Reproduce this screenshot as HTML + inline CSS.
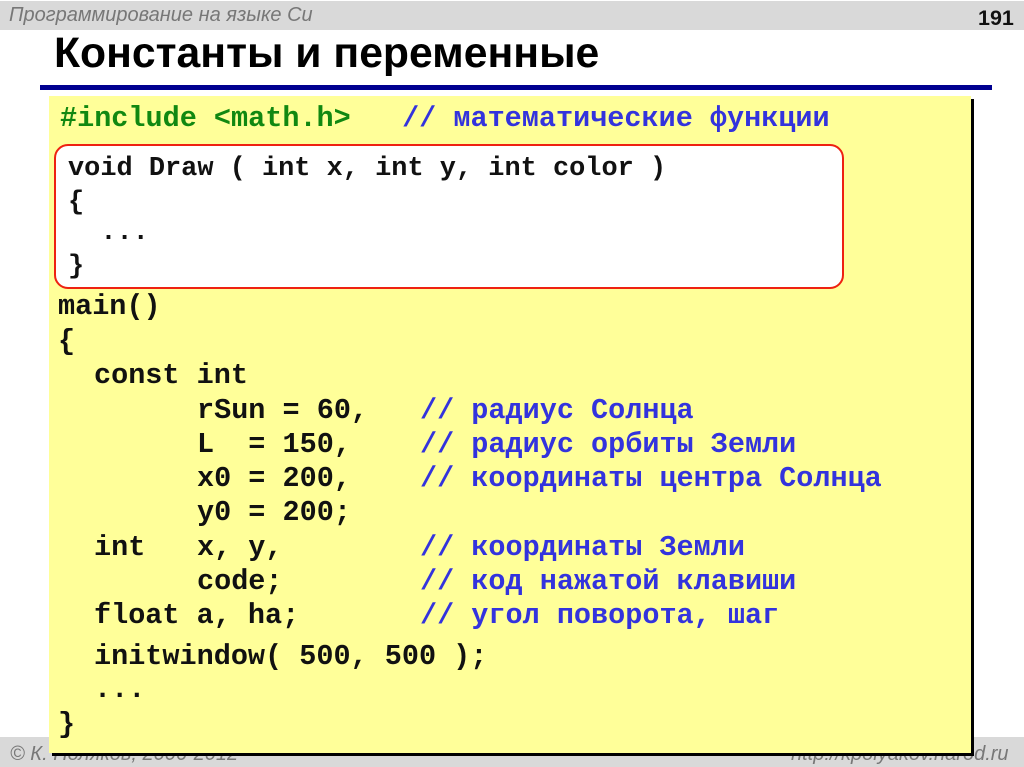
<!DOCTYPE html>
<html lang="ru">
<head>
<meta charset="utf-8">
<title>Константы и переменные</title>
<style>
html,body{margin:0;padding:0;background:#fff;}
#s{position:relative;width:1024px;height:767px;overflow:hidden;background:#fff;font-family:"Liberation Sans",sans-serif;}
#s div{position:absolute;}
.l{font-family:"Liberation Mono",monospace;font-weight:bold;font-size:28.5px;line-height:34px;height:34px;white-space:pre;color:#111;}
.b{font-size:26.95px;}
.c{color:#3333dd;}
.g{color:#118811;}
.f{font-style:italic;font-size:20px;line-height:24px;color:#777;white-space:pre;}
</style>
</head>
<body>
<div id="s">
<div style="left:0;top:1px;width:1024px;height:29px;background:#d9d9d9"></div>
<div style="left:0;top:737px;width:1024px;height:30px;background:#d9d9d9"></div>
<div class="f" style="left:9px;top:3px;">Программирование на языке Си</div>
<div style="left:978px;top:4px;font-weight:bold;font-size:21.5px;line-height:28px;color:#111">191</div>
<div style="left:54px;top:29px;font-weight:bold;font-size:42.7px;line-height:48px;color:#000;white-space:pre">Константы и переменные</div>
<div style="left:40px;top:85px;width:952px;height:5px;background:#000090"></div>
<div class="f" style="left:10px;top:742px;">© К. Поляков, 2006-2012</div>
<div class="f" style="left:791px;top:742px;">http://kpolyakov.narod.ru</div>
<div style="left:52px;top:99px;width:922px;height:657px;background:#000"></div>
<div style="left:49px;top:96px;width:922px;height:657px;background:#ffff99"></div>
<div style="left:54px;top:144px;width:786px;height:141px;background:#fff;border:2px solid #ee2211;border-radius:14px"></div>

<div class="l g" style="left:60px;top:102px">#include &lt;math.h&gt;   <span class="c">// математические функции</span></div>
<div class="l b" style="left:68px;top:152px">void Draw ( int x, int y, int color )</div>
<div class="l b" style="left:68px;top:186px">{</div>
<div class="l b" style="left:68px;top:216px">  ...</div>
<div class="l b" style="left:68px;top:250px">}</div>
<div class="l" style="left:58px;top:290px">main()</div>
<div class="l" style="left:58px;top:325px">{</div>
<div class="l" style="left:94px;top:359px">const int</div>
<div class="l" style="left:197px;top:394px">rSun = 60,</div>
<div class="l c" style="left:420px;top:394px">// радиус Солнца</div>
<div class="l" style="left:197px;top:428px">L  = 150,</div>
<div class="l c" style="left:420px;top:428px">// радиус орбиты Земли</div>
<div class="l" style="left:197px;top:462px">x0 = 200,</div>
<div class="l c" style="left:420px;top:462px">// координаты центра Солнца</div>
<div class="l" style="left:197px;top:496px">y0 = 200;</div>
<div class="l" style="left:94px;top:531px">int</div>
<div class="l" style="left:197px;top:531px">x, y,</div>
<div class="l c" style="left:420px;top:531px">// координаты Земли</div>
<div class="l" style="left:197px;top:565px">code;</div>
<div class="l c" style="left:420px;top:565px">// код нажатой клавиши</div>
<div class="l" style="left:94px;top:599px">float a, ha;</div>
<div class="l c" style="left:420px;top:599px">// угол поворота, шаг</div>
<div class="l" style="left:94px;top:640px">initwindow( 500, 500 );</div>
<div class="l" style="left:94px;top:673px">...</div>
<div class="l" style="left:58px;top:708px">}</div>
</div>
</body>
</html>
